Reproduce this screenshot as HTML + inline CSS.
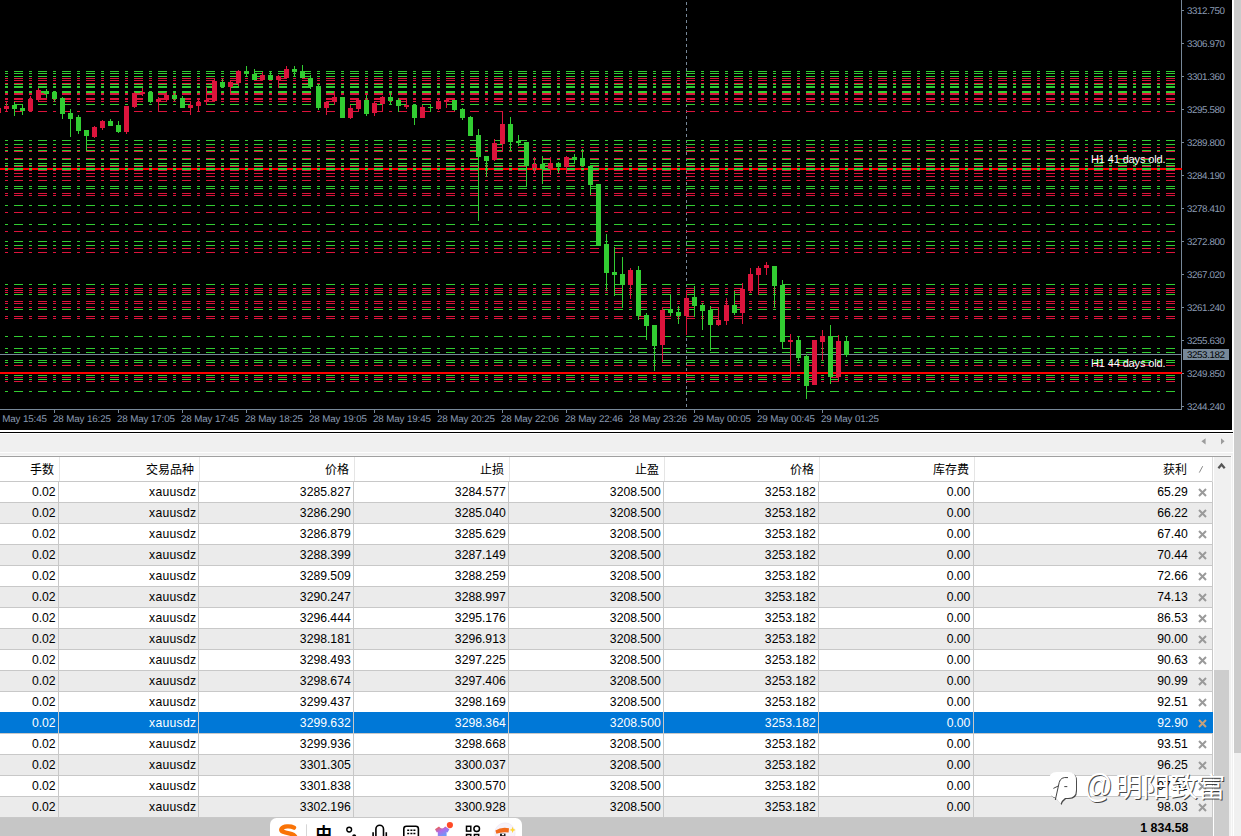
<!DOCTYPE html>
<html><head><meta charset="utf-8"><title>chart</title>
<style>
html,body{margin:0;padding:0}
body{width:1241px;height:836px;position:relative;overflow:hidden;background:#f0f0f0;font-family:"Liberation Sans",sans-serif}
.abs{position:absolute}
#chart{position:absolute;left:0;top:0}
.pl{position:absolute;left:1187px;font-size:9.8px;line-height:9px;color:#8c9db5;white-space:nowrap;letter-spacing:-.41px;text-rendering:geometricPrecision}
.tl{position:absolute;top:415px;font-size:9.8px;line-height:9px;color:#8c9db5;white-space:nowrap;letter-spacing:-.13px;text-rendering:geometricPrecision}
.lab{position:absolute;left:1091px;font-size:11px;line-height:12px;color:#fff;white-space:nowrap;letter-spacing:-.13px}
.row{position:absolute;left:0;width:1213px;height:20px;font-size:12.2px;line-height:20px;color:#000;white-space:nowrap}
.row.alt{background:#ebebeb}
.row.sel{background:#0078d7;color:#fff;height:21px;margin-top:-1px;padding-top:1px;box-sizing:border-box}
.row span{position:absolute;top:0;text-align:right}
.sel span{top:1px}
.a{right:1157.4px}.b{right:1016.6px;letter-spacing:.28px}.c{right:862.3px}.d{right:707.3px}.e{right:552.3px}.f{right:397.3px}.g{right:242.6px}.h{right:25.2px}
.hl{position:absolute;left:0;width:1213px;height:1px;background:#c8c8c8}
.vl{position:absolute;top:482px;height:335px;width:1px;background:#c8c8c8}
.hv{position:absolute;top:457px;height:24px;width:1px;background:#e5e5e5}
.x{position:absolute;left:1197.6px;top:5.5px}.sel .x{top:6.6px}
.hd{font-family:"Liberation Sans","Noto Sans CJK SC",sans-serif;font-size:12px;fill:#000}
</style></head><body>

<svg id="chart" width="1232" height="430" viewBox="0 0 1232 430">
<rect x="0" y="0" width="1232" height="430" fill="#000"/>
<g shape-rendering="crispEdges">
<rect x="1181" y="0" width="1" height="410" fill="#778899"/>
<rect x="0" y="409" width="1182" height="1" fill="#778899"/>
<path d="M1182 10h2v1h-2zM1182 43h2v1h-2zM1182 76h2v1h-2zM1182 109h2v1h-2zM1182 142h2v1h-2zM1182 175h2v1h-2zM1182 208h2v1h-2zM1182 241h2v1h-2zM1182 274h2v1h-2zM1182 307h2v1h-2zM1182 340h2v1h-2zM1182 373h2v1h-2zM1182 406h2v1h-2z" fill="#778899"/>
<path d="M54 410h1v3h-1zM118 410h1v3h-1zM182 410h1v3h-1zM246 410h1v3h-1zM310 410h1v3h-1zM374 410h1v3h-1zM438 410h1v3h-1zM502 410h1v3h-1zM566 410h1v3h-1zM630 410h1v3h-1zM694 410h1v3h-1zM758 410h1v3h-1zM822 410h1v3h-1z" fill="#778899"/>
<path d="M686.5 2V409" stroke="#778899" stroke-width="1" stroke-dasharray="3 3" fill="none"/>
<rect x="0" y="168" width="1182" height="2" fill="#f00"/>
<rect x="0" y="372" width="1182" height="2" fill="#f00"/>
<rect x="0" y="354" width="1181" height="1" fill="#778899"/>
<path d="M-10 71.5H1175M-10 73.5H1175M-10 76.5H1175M-10 84.5H1175M-10 104.5H1175M-10 140.5H1175M-10 144.5H1175M-10 150.5H1175M-10 159.5H1175M-10 163.5H1175M-10 165.5H1175M-10 186.5H1175M-10 188.5H1175M-10 205.5H1175M-10 224.5H1175M-10 241.5H1175M-10 245.5H1175M-10 284.5H1175M-10 294.5H1175M-10 309.5H1175M-10 336.5H1175M-10 348.5H1175M-10 352.5H1175M-10 360.5H1175M-10 362.5H1175M-10 375.5H1175M-10 379.5H1175M-10 391.5H1175" stroke="#32cd32" stroke-width="1" stroke-dasharray="9 6 3 6" fill="none"/>
<path d="M-10 78.5H1175M-10 80.5H1175M-10 83.5H1175M-10 101.5H1175M-10 111.5H1175M-10 147.5H1175M-10 151.5H1175M-10 158.5H1175M-10 166.5H1175M-10 170.5H1175M-10 173.5H1175M-10 176.5H1175M-10 180.5H1175M-10 193.5H1175M-10 195.5H1175M-10 212.5H1175M-10 231.5H1175M-10 248.5H1175M-10 252.5H1175M-10 288.5H1175M-10 290.5H1175M-10 292.5H1175M-10 301.5H1175M-10 303.5H1175M-10 307.5H1175M-10 316.5H1175M-10 318.5H1175M-10 365.5H1175M-10 377.5H1175M-10 381.5H1175" stroke="#dc143c" stroke-width="1" stroke-dasharray="9 6 3 6" fill="none"/>
<path d="M-10 87H1175M-10 92H1175M-10 169H1175" stroke="#32cd32" stroke-width="2" stroke-dasharray="9 6 3 6" fill="none"/>
<path d="M-10 94H1175M-10 99H1175" stroke="#dc143c" stroke-width="2" stroke-dasharray="9 6 3 6" fill="none"/>
<path d="M14 102h1v14h-1zM12 105h5v4h-5zM22 104h1v11h-1zM20 108h5v3h-5zM46 89h1v9h-1zM44 91h5v3h-5zM54 91h1v11h-1zM52 92h5v7h-5zM62 97h1v22h-1zM60 98h5v16h-5zM70 109h1v28h-1zM68 113h5v6h-5zM78 115h1v19h-1zM76 117h5v14h-5zM86 130h1v21h-1zM84 130h5v6h-5zM110 119h1v7h-1zM108 121h5v5h-5zM118 121h1v12h-1zM116 125h5v7h-5zM150 91h1v12h-1zM148 92h5v10h-5zM174 91h1v10h-1zM172 95h5v4h-5zM182 96h1v12h-1zM180 98h5v10h-5zM222 79h1v9h-1zM220 82h5v5h-5zM246 66h1v11h-1zM244 71h5v3h-5zM254 69h1v11h-1zM252 74h5v6h-5zM270 71h1v9h-1zM268 75h5v5h-5zM294 66h1v11h-1zM292 69h5v3h-5zM302 65h1v13h-1zM300 71h5v7h-5zM310 75h1v14h-1zM308 78h5v9h-5zM318 84h1v26h-1zM316 86h5v22h-5zM342 97h1v21h-1zM340 97h5v21h-5zM366 95h1v21h-1zM364 100h5v14h-5zM390 91h1v14h-1zM388 97h5v4h-5zM398 98h1v14h-1zM396 100h5v6h-5zM414 104h1v21h-1zM412 105h5v13h-5zM430 104h1v8h-1zM428 107h5v1h-5zM454 100h1v11h-1zM452 100h5v10h-5zM462 108h1v12h-1zM460 109h5v9h-5zM470 116h1v20h-1zM468 117h5v19h-5zM478 129h1v92h-1zM476 135h5v22h-5zM486 156h1v21h-1zM484 156h5v5h-5zM510 117h1v34h-1zM508 124h5v18h-5zM518 135h1v11h-1zM516 141h5v2h-5zM526 142h1v45h-1zM524 142h5v24h-5zM542 156h1v28h-1zM540 164h5v5h-5zM558 162h1v11h-1zM556 163h5v4h-5zM574 154h1v10h-1zM572 157h5v3h-5zM582 149h1v18h-1zM580 158h5v8h-5zM590 166h1v29h-1zM588 166h5v19h-5zM598 184h1v62h-1zM596 184h5v62h-5zM606 234h1v57h-1zM604 244h5v29h-5zM614 247h1v49h-1zM612 272h5v3h-5zM622 257h1v51h-1zM620 274h5v11h-5zM638 266h1v54h-1zM636 270h5v46h-5zM646 313h1v27h-1zM644 315h5v11h-5zM654 325h1v46h-1zM652 325h5v21h-5zM670 294h1v22h-1zM668 309h5v4h-5zM678 306h1v18h-1zM676 312h5v4h-5zM694 286h1v31h-1zM692 297h5v9h-5zM702 303h1v27h-1zM700 305h5v6h-5zM710 306h1v45h-1zM708 310h5v15h-5zM734 291h1v24h-1zM732 305h5v8h-5zM774 266h1v42h-1zM772 266h5v20h-5zM782 280h1v69h-1zM780 285h5v57h-5zM798 336h1v25h-1zM796 340h5v18h-5zM806 354h1v45h-1zM804 356h5v30h-5zM830 325h1v59h-1zM828 336h5v41h-5zM846 336h1v21h-1zM844 341h5v14h-5z" fill="#32cd32"/>
<path d="M-2 108h1v5h-1zM-4 108h5v5h-5zM6 101h1v11h-1zM4 106h5v3h-5zM30 96h1v15h-1zM28 99h5v12h-5zM38 88h1v14h-1zM36 90h5v10h-5zM94 126h1v12h-1zM92 127h5v10h-5zM102 120h1v10h-1zM100 121h5v7h-5zM126 106h1v28h-1zM124 106h5v26h-5zM134 92h1v16h-1zM132 93h5v14h-5zM142 88h1v8h-1zM140 92h5v2h-5zM158 97h1v15h-1zM156 99h5v3h-5zM166 92h1v10h-1zM164 95h5v5h-5zM190 102h1v13h-1zM188 105h5v3h-5zM198 98h1v14h-1zM196 102h5v4h-5zM206 87h1v18h-1zM204 100h5v2h-5zM214 79h1v23h-1zM212 81h5v20h-5zM230 81h1v13h-1zM228 82h5v5h-5zM238 70h1v16h-1zM236 71h5v12h-5zM262 72h1v8h-1zM260 75h5v5h-5zM278 75h1v13h-1zM276 76h5v4h-5zM286 66h1v13h-1zM284 69h5v9h-5zM326 101h1v14h-1zM324 102h5v6h-5zM334 91h1v14h-1zM332 97h5v5h-5zM350 105h1v14h-1zM348 108h5v10h-5zM358 98h1v14h-1zM356 100h5v9h-5zM374 101h1v15h-1zM372 103h5v10h-5zM382 96h1v16h-1zM380 97h5v7h-5zM406 98h1v11h-1zM404 105h5v2h-5zM422 105h1v13h-1zM420 107h5v11h-5zM438 100h1v10h-1zM436 101h5v8h-5zM446 99h1v9h-1zM444 100h5v2h-5zM494 139h1v22h-1zM492 143h5v17h-5zM502 111h1v40h-1zM500 124h5v20h-5zM534 157h1v17h-1zM532 164h5v4h-5zM550 157h1v18h-1zM548 163h5v6h-5zM566 156h1v18h-1zM564 157h5v10h-5zM630 268h1v31h-1zM628 270h5v15h-5zM662 307h1v55h-1zM660 310h5v35h-5zM686 290h1v45h-1zM684 298h5v18h-5zM718 307h1v19h-1zM716 320h5v5h-5zM726 298h1v27h-1zM724 305h5v16h-5zM742 283h1v41h-1zM740 289h5v24h-5zM750 268h1v25h-1zM748 274h5v17h-5zM758 266h1v29h-1zM756 268h5v7h-5zM766 262h1v13h-1zM764 265h5v3h-5zM790 334h1v44h-1zM788 340h5v2h-5zM814 340h1v45h-1zM812 340h5v45h-5zM822 330h1v31h-1zM820 336h5v6h-5zM838 335h1v47h-1zM836 341h5v36h-5z" fill="#dc143c"/>
<rect x="1183" y="349" width="46" height="11" fill="#778899"/>
</g></svg>
<div class="pl" style="top:7px">3312.750</div>
<div class="pl" style="top:40px">3306.970</div>
<div class="pl" style="top:73px">3301.360</div>
<div class="pl" style="top:106px">3295.580</div>
<div class="pl" style="top:139px">3289.800</div>
<div class="pl" style="top:172px">3284.190</div>
<div class="pl" style="top:205px">3278.410</div>
<div class="pl" style="top:238px">3272.800</div>
<div class="pl" style="top:271px">3267.020</div>
<div class="pl" style="top:304px">3261.240</div>
<div class="pl" style="top:337px">3255.630</div>
<div class="pl" style="top:370px">3249.850</div>
<div class="pl" style="top:403px">3244.240</div>
<div class="pl" style="top:351px;color:#000">3253.182</div>
<div class="tl" style="left:-11px">28 May 15:45</div>
<div class="tl" style="left:53px">28 May 16:25</div>
<div class="tl" style="left:117px">28 May 17:05</div>
<div class="tl" style="left:181px">28 May 17:45</div>
<div class="tl" style="left:245px">28 May 18:25</div>
<div class="tl" style="left:309px">28 May 19:05</div>
<div class="tl" style="left:373px">28 May 19:45</div>
<div class="tl" style="left:437px">28 May 20:25</div>
<div class="tl" style="left:501px">28 May 22:06</div>
<div class="tl" style="left:565px">28 May 22:46</div>
<div class="tl" style="left:629px">28 May 23:26</div>
<div class="tl" style="left:693px">29 May 00:05</div>
<div class="tl" style="left:757px">29 May 00:45</div>
<div class="tl" style="left:821px">29 May 01:25</div>
<div class="lab" style="top:153px">H1 41 days old.</div>
<div class="lab" style="top:357px">H1 44 days old.</div>
<div class="abs" style="left:1232px;top:0;width:1px;height:432px;background:#fff"></div>
<div class="abs" style="left:1233px;top:0;width:1px;height:836px;background:#fff"></div>
<div class="abs" style="left:1234px;top:0;width:7px;height:753px;background:#ccc"></div>
<div class="abs" style="left:0;top:430px;width:1233px;height:4px;background:#fff"></div>
<div class="abs" style="left:0;top:432px;width:1233px;height:1px;background:#000"></div>
<svg class="abs" style="left:1198px;top:436px" width="30" height="11" viewBox="0 0 30 11"><path d="M7.6 2.2L3.4 5.3L7.6 8.4z M23 2.2L26.6 5.3L23 8.4z" fill="#9c9c9c"/></svg>
<div class="abs" style="left:0;top:452px;width:1233px;height:1px;background:#fdfdfd"></div>
<div class="abs" style="left:0;top:455px;width:1232px;height:1px;background:#f7f7f7"></div>
<div class="abs" style="left:0;top:456px;width:1231px;height:1px;background:#a0a0a0"></div>
<div class="abs" style="left:1231px;top:456px;width:1px;height:380px;background:#fbfbfb"></div>
<div class="abs" style="left:0;top:457px;width:1213px;height:24px;background:#fff"></div>
<div class="abs" style="left:0;top:482px;width:1213px;height:336px;background:#fff"></div>
<div class="abs" style="left:1213px;top:457px;width:1px;height:379px;background:#fff"></div><div class="abs" style="left:1214px;top:457px;width:17px;height:379px;background:#f0f0f0"></div>
<div class="abs" style="left:1214px;top:670px;width:15px;height:166px;background:#cdcdcd"></div>
<svg class="abs" style="left:1217px;top:462px" width="10" height="8" viewBox="0 0 10 8"><path d="M1.4 6.3L4.55 2.5L7.7 6.3" stroke="#555" stroke-width="2.2" fill="none"/></svg>
<svg class="abs" style="left:29.5px;top:462px" width="24" height="16" viewBox="0 0 24 16"><text class="hd" x="0" y="12.2">手数</text></svg>
<svg class="abs" style="left:145.5px;top:462px" width="48" height="16" viewBox="0 0 48 16"><text class="hd" x="0" y="12.2">交易品种</text></svg>
<svg class="abs" style="left:324.5px;top:462px" width="24" height="16" viewBox="0 0 24 16"><text class="hd" x="0" y="12.2">价格</text></svg>
<svg class="abs" style="left:479.5px;top:462px" width="24" height="16" viewBox="0 0 24 16"><text class="hd" x="0" y="12.2">止损</text></svg>
<svg class="abs" style="left:634.5px;top:462px" width="24" height="16" viewBox="0 0 24 16"><text class="hd" x="0" y="12.2">止盈</text></svg>
<svg class="abs" style="left:789.5px;top:462px" width="24" height="16" viewBox="0 0 24 16"><text class="hd" x="0" y="12.2">价格</text></svg>
<svg class="abs" style="left:932.5px;top:462px" width="36" height="16" viewBox="0 0 36 16"><text class="hd" x="0" y="12.2">库存费</text></svg>
<svg class="abs" style="left:1163.4px;top:462px" width="24" height="16" viewBox="0 0 24 16"><text class="hd" x="0" y="12.2">获利</text></svg>
<svg class="abs" style="left:1197px;top:464px" width="8" height="10" viewBox="0 0 8 10"><path d="M2.3 8.6L5.7 2.2" stroke="#8a8a8a" stroke-width="1" fill="none"/></svg>
<div class="row" style="top:482px"><span class="a">0.02</span><span class="b">xauusdz</span><span class="c">3285.827</span><span class="d">3284.577</span><span class="e">3208.500</span><span class="f">3253.182</span><span class="g">0.00</span><span class="h">65.29</span><svg class="x" width="9" height="9" viewBox="0 0 9 9"><path d="M1 1L8 8M8 1L1 8" stroke="#9a9a9a" stroke-width="2" fill="none"/></svg></div>
<div class="row alt" style="top:503px"><span class="a">0.02</span><span class="b">xauusdz</span><span class="c">3286.290</span><span class="d">3285.040</span><span class="e">3208.500</span><span class="f">3253.182</span><span class="g">0.00</span><span class="h">66.22</span><svg class="x" width="9" height="9" viewBox="0 0 9 9"><path d="M1 1L8 8M8 1L1 8" stroke="#9a9a9a" stroke-width="2" fill="none"/></svg></div>
<div class="row" style="top:524px"><span class="a">0.02</span><span class="b">xauusdz</span><span class="c">3286.879</span><span class="d">3285.629</span><span class="e">3208.500</span><span class="f">3253.182</span><span class="g">0.00</span><span class="h">67.40</span><svg class="x" width="9" height="9" viewBox="0 0 9 9"><path d="M1 1L8 8M8 1L1 8" stroke="#9a9a9a" stroke-width="2" fill="none"/></svg></div>
<div class="row alt" style="top:545px"><span class="a">0.02</span><span class="b">xauusdz</span><span class="c">3288.399</span><span class="d">3287.149</span><span class="e">3208.500</span><span class="f">3253.182</span><span class="g">0.00</span><span class="h">70.44</span><svg class="x" width="9" height="9" viewBox="0 0 9 9"><path d="M1 1L8 8M8 1L1 8" stroke="#9a9a9a" stroke-width="2" fill="none"/></svg></div>
<div class="row" style="top:566px"><span class="a">0.02</span><span class="b">xauusdz</span><span class="c">3289.509</span><span class="d">3288.259</span><span class="e">3208.500</span><span class="f">3253.182</span><span class="g">0.00</span><span class="h">72.66</span><svg class="x" width="9" height="9" viewBox="0 0 9 9"><path d="M1 1L8 8M8 1L1 8" stroke="#9a9a9a" stroke-width="2" fill="none"/></svg></div>
<div class="row alt" style="top:587px"><span class="a">0.02</span><span class="b">xauusdz</span><span class="c">3290.247</span><span class="d">3288.997</span><span class="e">3208.500</span><span class="f">3253.182</span><span class="g">0.00</span><span class="h">74.13</span><svg class="x" width="9" height="9" viewBox="0 0 9 9"><path d="M1 1L8 8M8 1L1 8" stroke="#9a9a9a" stroke-width="2" fill="none"/></svg></div>
<div class="row" style="top:608px"><span class="a">0.02</span><span class="b">xauusdz</span><span class="c">3296.444</span><span class="d">3295.176</span><span class="e">3208.500</span><span class="f">3253.182</span><span class="g">0.00</span><span class="h">86.53</span><svg class="x" width="9" height="9" viewBox="0 0 9 9"><path d="M1 1L8 8M8 1L1 8" stroke="#9a9a9a" stroke-width="2" fill="none"/></svg></div>
<div class="row alt" style="top:629px"><span class="a">0.02</span><span class="b">xauusdz</span><span class="c">3298.181</span><span class="d">3296.913</span><span class="e">3208.500</span><span class="f">3253.182</span><span class="g">0.00</span><span class="h">90.00</span><svg class="x" width="9" height="9" viewBox="0 0 9 9"><path d="M1 1L8 8M8 1L1 8" stroke="#9a9a9a" stroke-width="2" fill="none"/></svg></div>
<div class="row" style="top:650px"><span class="a">0.02</span><span class="b">xauusdz</span><span class="c">3298.493</span><span class="d">3297.225</span><span class="e">3208.500</span><span class="f">3253.182</span><span class="g">0.00</span><span class="h">90.63</span><svg class="x" width="9" height="9" viewBox="0 0 9 9"><path d="M1 1L8 8M8 1L1 8" stroke="#9a9a9a" stroke-width="2" fill="none"/></svg></div>
<div class="row alt" style="top:671px"><span class="a">0.02</span><span class="b">xauusdz</span><span class="c">3298.674</span><span class="d">3297.406</span><span class="e">3208.500</span><span class="f">3253.182</span><span class="g">0.00</span><span class="h">90.99</span><svg class="x" width="9" height="9" viewBox="0 0 9 9"><path d="M1 1L8 8M8 1L1 8" stroke="#9a9a9a" stroke-width="2" fill="none"/></svg></div>
<div class="row" style="top:692px"><span class="a">0.02</span><span class="b">xauusdz</span><span class="c">3299.437</span><span class="d">3298.169</span><span class="e">3208.500</span><span class="f">3253.182</span><span class="g">0.00</span><span class="h">92.51</span><svg class="x" width="9" height="9" viewBox="0 0 9 9"><path d="M1 1L8 8M8 1L1 8" stroke="#9a9a9a" stroke-width="2" fill="none"/></svg></div>
<div class="row sel" style="top:713px"><span class="a">0.02</span><span class="b">xauusdz</span><span class="c">3299.632</span><span class="d">3298.364</span><span class="e">3208.500</span><span class="f">3253.182</span><span class="g">0.00</span><span class="h">92.90</span><svg class="x" width="9" height="9" viewBox="0 0 9 9"><path d="M1 1L8 8M8 1L1 8" stroke="#c4a07c" stroke-width="2" fill="none"/></svg></div>
<div class="row" style="top:734px"><span class="a">0.02</span><span class="b">xauusdz</span><span class="c">3299.936</span><span class="d">3298.668</span><span class="e">3208.500</span><span class="f">3253.182</span><span class="g">0.00</span><span class="h">93.51</span><svg class="x" width="9" height="9" viewBox="0 0 9 9"><path d="M1 1L8 8M8 1L1 8" stroke="#9a9a9a" stroke-width="2" fill="none"/></svg></div>
<div class="row alt" style="top:755px"><span class="a">0.02</span><span class="b">xauusdz</span><span class="c">3301.305</span><span class="d">3300.037</span><span class="e">3208.500</span><span class="f">3253.182</span><span class="g">0.00</span><span class="h">96.25</span><svg class="x" width="9" height="9" viewBox="0 0 9 9"><path d="M1 1L8 8M8 1L1 8" stroke="#9a9a9a" stroke-width="2" fill="none"/></svg></div>
<div class="row" style="top:776px"><span class="a">0.02</span><span class="b">xauusdz</span><span class="c">3301.838</span><span class="d">3300.570</span><span class="e">3208.500</span><span class="f">3253.182</span><span class="g">0.00</span><span class="h">97.32</span><svg class="x" width="9" height="9" viewBox="0 0 9 9"><path d="M1 1L8 8M8 1L1 8" stroke="#9a9a9a" stroke-width="2" fill="none"/></svg></div>
<div class="row alt" style="top:797px"><span class="a">0.02</span><span class="b">xauusdz</span><span class="c">3302.196</span><span class="d">3300.928</span><span class="e">3208.500</span><span class="f">3253.182</span><span class="g">0.00</span><span class="h">98.03</span><svg class="x" width="9" height="9" viewBox="0 0 9 9"><path d="M1 1L8 8M8 1L1 8" stroke="#9a9a9a" stroke-width="2" fill="none"/></svg></div>
<div class="abs" style="left:0;top:817px;width:1213px;height:19px;background:#c6c6c6"></div>
<div class="abs" style="right:52.5px;top:818px;font-size:12.4px;line-height:20px;font-weight:bold;color:#000;white-space:nowrap">1 834.58</div>
<div class="hl" style="top:481px"></div>
<div class="hl" style="top:502px"></div>
<div class="hl" style="top:523px"></div>
<div class="hl" style="top:544px"></div>
<div class="hl" style="top:565px"></div>
<div class="hl" style="top:586px"></div>
<div class="hl" style="top:607px"></div>
<div class="hl" style="top:628px"></div>
<div class="hl" style="top:649px"></div>
<div class="hl" style="top:670px"></div>
<div class="hl" style="top:691px"></div>
<div class="hl" style="top:733px"></div>
<div class="hl" style="top:754px"></div>
<div class="hl" style="top:775px"></div>
<div class="hl" style="top:796px"></div>
<div class="hl" style="top:817px"></div>
<div class="vl" style="left:58px"></div>
<div class="vl" style="left:198px"></div>
<div class="vl" style="left:353px"></div>
<div class="vl" style="left:508px"></div>
<div class="vl" style="left:663px"></div>
<div class="vl" style="left:818px"></div>
<div class="vl" style="left:973px"></div>
<div class="vl" style="left:1212px"></div>
<div class="abs" style="left:1212px;top:712px;width:1px;height:21px;background:#0078d7"></div>
<div class="hv" style="left:59px"></div>
<div class="hv" style="left:199px"></div>
<div class="hv" style="left:354px"></div>
<div class="hv" style="left:509px"></div>
<div class="hv" style="left:664px"></div>
<div class="hv" style="left:819px"></div>
<div class="hv" style="left:974px"></div>
<div class="abs" style="left:1212px;top:457px;width:1px;height:25px;background:#dcdcdc"></div>
<svg class="abs" style="left:270px;top:818px" width="252" height="18" viewBox="0 0 252 18"><defs><linearGradient id="sg" x1="0" y1="0" x2="0.6" y2="1"><stop offset="0" stop-color="#ff5a1f"/><stop offset=".45" stop-color="#b06ae8"/><stop offset="1" stop-color="#5aa8ff"/></linearGradient></defs><rect x="0" y="0" width="252" height="30" rx="6.5" fill="#fff"/><path d="M24 9.6C20 7.6 13.5 8 11.6 10.8C10 13.6 15 14.6 19 15.4C23.5 16.3 26 17.8 25.6 21" stroke="#f97306" stroke-width="4.4" stroke-linecap="round" fill="none"/><rect x="36" y="6.3" width="1" height="12" fill="#d6d6d6"/><text x="45.5" y="21.6" font-family="Liberation Sans, Noto Sans CJK SC, sans-serif" font-size="16.5" font-weight="bold" fill="#000">中</text><circle cx="79.2" cy="11.6" r="2.4" stroke="#000" stroke-width="1.4" fill="none"/><circle cx="84.2" cy="18.2" r="2" fill="#000"/><rect x="105.9" y="7.2" width="7.6" height="14" rx="3.8" stroke="#000" stroke-width="1.6" fill="none"/><path d="M103.1 14.2V18M116.3 14.2V18" stroke="#000" stroke-width="1.6" fill="none"/><rect x="133.8" y="8.2" width="14.6" height="14" rx="2.6" stroke="#000" stroke-width="1.6" fill="none"/><path d="M137.2 11.6h2v1.5h-2zM140.4 11.6h2v1.5h-2zM143.4 11.6h2v1.5h-2zM137.2 14.8h2v1.5h-2zM140.4 14.8h2v1.5h-2zM143.4 14.8h2v1.5h-2z" fill="#000"/><path d="M165 11.2L169 8.6Q172 12.6 175.2 8.6L179.4 11.2L177.6 14.6L176.6 14V20H167.8V14L166.8 14.6Z" fill="url(#sg)"/><circle cx="179.9" cy="7.1" r="3.1" fill="#ff4a26"/><rect x="196.5" y="8.3" width="4.3" height="4.8" stroke="#000" stroke-width="1.5" fill="none"/><circle cx="206.7" cy="10.7" r="2.8" stroke="#000" stroke-width="1.5" fill="none"/><rect x="196.5" y="16.5" width="4.3" height="4.8" stroke="#000" stroke-width="1.5" fill="none"/><rect x="204.4" y="16.5" width="4.3" height="4.8" stroke="#000" stroke-width="1.5" fill="none"/><circle cx="235" cy="15" r="10.2" fill="#f7f2fa" stroke="#ece6f2" stroke-width=".6"/><path d="M225.4 12.6Q231 8.6 239 10.2L238.6 14.4Q231 13.6 226.4 15.8Z" fill="#f26a1b"/><path d="M230 15.6h5.5v3h-5.5z" fill="#222"/><path d="M232 15.8h2v1.4h-2z" fill="#fff"/><path d="M242.6 8.8L243.5 11L245.8 11.9L243.5 12.8L242.6 15L241.7 12.8L239.4 11.9L241.7 11Z" fill="#ffd633"/></svg>
<svg class="abs" style="left:1045px;top:768px" width="190" height="42" viewBox="0 0 190 42"><path d="M12 4H23Q31 4 31 12V22Q31 30 23 30H20Q17 32 15.5 36Q13 32 10 29.5Q4 28 4 21V12Q4 4 12 4Z" transform="translate(1,1)" fill="#000" opacity=".7"/><path d="M12 4H23Q31 4 31 12V22Q31 30 23 30H20Q17 32 15.5 36Q13 32 10 29.5Q4 28 4 21V12Q4 4 12 4Z" fill="#fff"/><path d="M23 9.6Q15.5 8.6 14.2 14.5L10.3 32" stroke="#222" stroke-width="1" fill="none" opacity=".85"/><path d="M8.4 20.4L13.2 18M19.3 18.6h3" stroke="#222" stroke-width="1" fill="none" opacity=".85"/><text x="0" y="0" font-family="Liberation Sans, sans-serif" font-size="29" fill="#000" opacity=".7" transform="translate(39.9,30.3) scale(.97,1.12)">@</text><text x="0" y="0" font-family="Liberation Sans, sans-serif" font-size="29" fill="#fff" transform="translate(38.9,29.3) scale(.97,1.12)">@</text><text x="70" y="28.6" font-family="Liberation Sans, Noto Sans CJK SC, sans-serif" font-size="27.6" fill="#000" opacity=".7" transform="translate(1,1)">明阳致富</text><text x="70" y="28.6" font-family="Liberation Sans, Noto Sans CJK SC, sans-serif" font-size="27.6" fill="#fff">明阳致富</text></svg>
</body></html>
